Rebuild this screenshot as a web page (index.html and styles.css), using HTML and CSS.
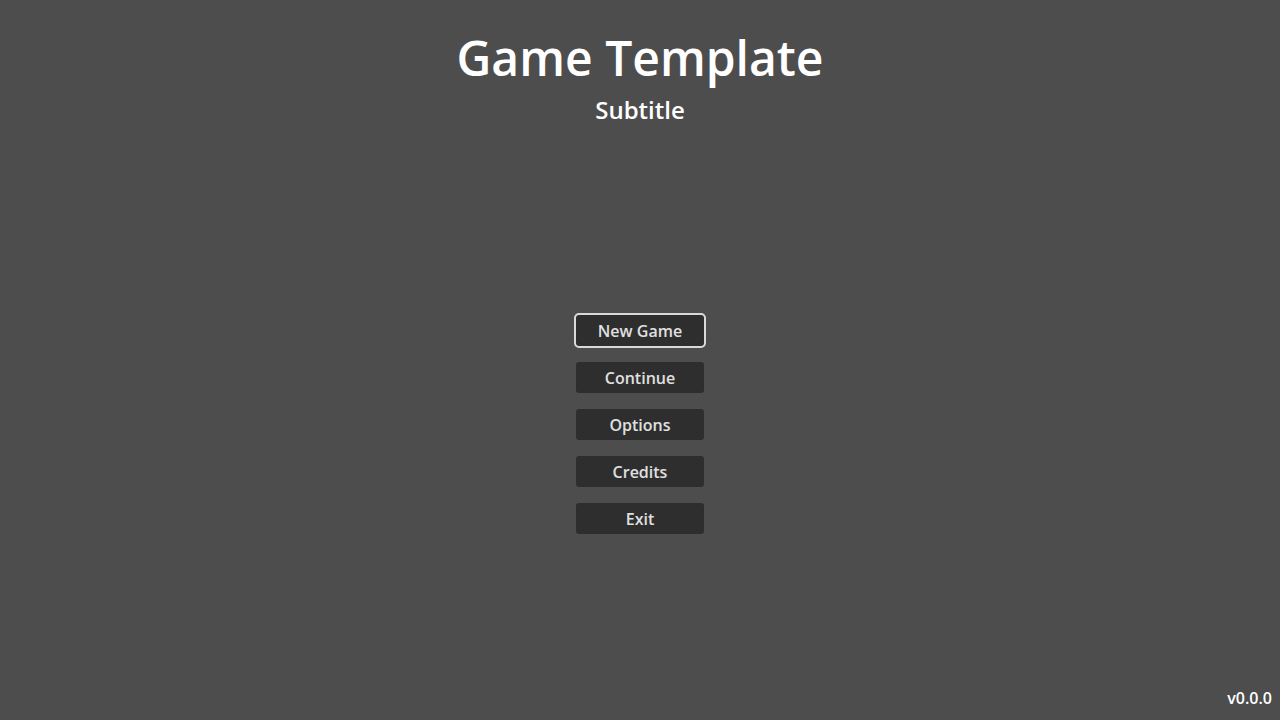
FILE: index.html
```html
<!DOCTYPE html>
<html lang="en">
<head>
<meta charset="utf-8">
<title>Game Template</title>
<link rel="stylesheet" href="styles.css">
</head>
<body>
<div class="screen">
  <header class="titles">
    <h1 class="title">Game Template</h1>
    <h2 class="subtitle">Subtitle</h2>
  </header>
  <nav class="menu">
    <button class="menu-btn focused">New Game</button>
    <button class="menu-btn">Continue</button>
    <button class="menu-btn">Options</button>
    <button class="menu-btn">Credits</button>
    <button class="menu-btn">Exit</button>
  </nav>
  <div class="version">v0.0.0</div>
</div>
</body>
</html>
```
FILE: styles.css
```css
html, body {
  margin: 0;
  padding: 0;
  background: #4d4d4d;
}
.screen {
  width: 1280px;
  height: 720px;
  display: flex;
  flex-direction: column;
  align-items: center;
  font-family: "Open Sans", "Noto Sans", sans-serif;
  color: #ffffff;
  box-sizing: border-box;
  padding: 34px 8px 11px;
}
.titles {
  display: flex;
  flex-direction: column;
  align-items: center;
  gap: 16px;
}
.title {
  margin: 0;
  font-size: 48px;
  line-height: 48px;
  font-weight: 600;
}
.subtitle {
  margin: 0;
  font-size: 24px;
  line-height: 24px;
  font-weight: 600;
}
.menu {
  margin-top: 193px;
  display: flex;
  flex-direction: column;
  gap: 16px;
}
.menu-btn {
  width: 128px;
  height: 31px;
  padding: 2px 0 0;
  border: none;
  border-radius: 3px;
  background: #2e2e2e;
  color: #e0e0e0;
  font-family: "Open Sans", "Noto Sans", sans-serif;
  font-size: 16px;
  font-weight: 600;
  line-height: 29px;
}
.menu-btn.focused {
  outline: 2px solid #d9d9d9;
  outline-offset: 0;
  border-radius: 3px;
}
.version {
  margin-top: auto;
  align-self: flex-end;
  font-size: 16px;
  line-height: 22px;
  font-weight: 600;
}
```
